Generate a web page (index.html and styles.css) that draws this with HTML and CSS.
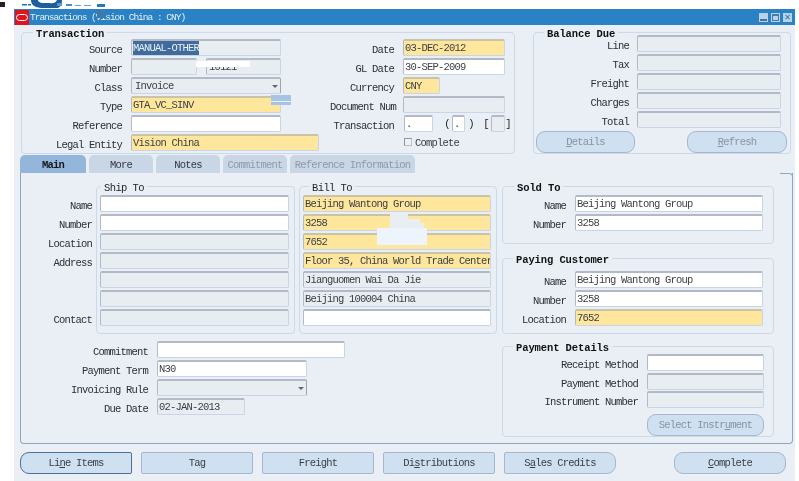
FILE: index.html
```html
<!DOCTYPE html>
<html lang="en">
<head>
<meta charset="utf-8">
<title>Transactions</title>
<link rel="stylesheet" href="styles.css">
</head>
<body>
<div class="page">
  <svg class="scrap" width="110" height="21" viewBox="0 0 110 21" aria-hidden="true">
    <rect x="0" y="2" width="5" height="5" fill="#222"/>
    <rect x="22" y="4" width="5" height="1.5" fill="#2a6fb0"/>
    <rect x="28" y="4" width="3" height="1.5" fill="#2a6fb0"/>
    <path d="M31 0 Q31 8 44 8 L58 8 Q62 6 62 0 L57 0 Q55 4 50 3 L42 3 Q38 2 38 0Z" fill="#1d5e9e"/>
    <rect x="57" y="3" width="5" height="3" fill="#5d95c8"/>
    <rect x="66" y="4" width="6" height="2" fill="#4d8cc4"/>
    <rect x="75" y="5" width="6" height="1" fill="#6a9fce"/>
    <rect x="84" y="5" width="7" height="1" fill="#6a9fce"/>
    <rect x="97" y="4" width="8" height="3" fill="#2a78bb"/>
    <rect x="97" y="10" width="8" height="8" fill="#3f78ad"/>
  </svg>
  <div class="window">
    <div class="titlebar">
      <span class="oracle"><span class="pill"></span></span>
      <span class="title">Transactions (Vision China : CNY)</span>
      <span class="winbtns">
        <span class="wb"><span class="wb-min"></span></span>
        <span class="wb"><span class="wb-max"></span></span>
        <span class="wb wb-x">✕</span>
      </span>
    </div>
    <div class="content">
      <div class="top">
        <section class="group g-trans">
          <div class="legend b lg-trans">Transaction</div>
          <div class="trans-cols">
            <div class="form fa">
              <div class="l">Source</div><div class="f"><span class="sel">MANUAL-OTHER</span></div>
              <div class="l">Number</div><div class="pair"><div class="f w66"></div><div class="f w75 pl">10121</div></div>
              <div class="l">Class</div><div class="f dd">Invoice<i class="arrow"></i></div>
              <div class="l">Type</div><div class="f y">GTA_VC_SINV</div>
              <div class="l">Reference</div><div class="f w"></div>
              <div class="l">Legal Entity</div><div class="f y w188">Vision China</div>
            </div>
            <div class="form fb">
              <div class="l">Date</div><div class="f y w102">03-DEC-2012</div>
              <div class="l">GL Date</div><div class="f w w102">30-SEP-2009</div>
              <div class="l">Currency</div><div class="f y w37">CNY</div>
              <div class="l">Document Num</div><div class="f w102"></div>
              <div class="l">Transaction</div>
              <div class="tx">
                <div class="f w w29">.</div><span class="sym s-open">(</span>
                <div class="f w w13">.</div><span class="sym">)</span><span class="sym s-br">[</span>
                <div class="f w14"></div><span class="sym s-end">]</span>
              </div>
              <div></div><div class="chk"><i class="box"></i>Complete</div>
            </div>
          </div>
        </section>
        <section class="group g-bal">
          <div class="legend b lg-bal">Balance Due</div>
          <div class="form fc">
            <div class="l">Line</div><div class="f"></div>
            <div class="l">Tax</div><div class="f"></div>
            <div class="l">Freight</div><div class="f"></div>
            <div class="l">Charges</div><div class="f"></div>
            <div class="l">Total</div><div class="f"></div>
          </div>
          <div class="bal-btns">
            <div class="btn dis rnd w99"><u>D</u>etails</div>
            <div class="btn dis rnd w100"><u>R</u>efresh</div>
          </div>
        </section>
      </div>

      <nav class="tabs">
        <div class="tab on w66">Main</div>
        <div class="tab w64">More</div>
        <div class="tab w64">Notes</div>
        <div class="tab off w64">Commitment</div>
        <div class="tab off w125">Reference Information</div>
      </nav>

      <div class="panel">
        <i class="corner"></i>
        <div class="upper">
          <div class="side-labels">
            <div class="l">Name</div><div class="l">Number</div><div class="l">Location</div><div class="l">Address</div><div class="l"></div><div class="l"></div><div class="l">Contact</div>
          </div>
          <section class="group g-ship">
            <div class="legend lg-ship">Ship To</div>
            <div class="stack">
              <div class="f w"></div><div class="f w"></div><div class="f"></div><div class="f"></div><div class="f"></div><div class="f"></div><div class="f"></div>
            </div>
          </section>
          <section class="group g-bill">
            <div class="legend lg-bill">Bill To</div>
            <div class="stack">
              <div class="f y">Beijing Wantong Group</div>
              <div class="f y">3258</div>
              <div class="f y">7652</div>
              <div class="f y">Floor 35, China World Trade Center</div>
              <div class="f">Jianguomen Wai Da Jie</div>
              <div class="f">Beijing 100004 China</div>
              <div class="f w"></div>
            </div>
          </section>
          <div class="right-col">
            <section class="group g-sold">
              <div class="legend b lg-sold">Sold To</div>
              <div class="form fd">
                <div class="l">Name</div><div class="f w">Beijing Wantong Group</div>
                <div class="l">Number</div><div class="f w">3258</div>
              </div>
            </section>
            <section class="group g-pay">
              <div class="legend b lg-r">Paying Customer</div>
              <div class="form fe">
                <div class="l">Name</div><div class="f w">Beijing Wantong Group</div>
                <div class="l">Number</div><div class="f w">3258</div>
                <div class="l">Location</div><div class="f y">7652</div>
              </div>
            </section>
          </div>
        </div>
        <div class="lower">
          <div class="form ff">
            <div class="l">Commitment</div><div class="f w w188"></div>
            <div class="l">Payment Term</div><div class="f w w150">N30</div>
            <div class="l">Invoicing Rule</div><div class="f dd w150"><i class="arrow"></i></div>
            <div class="l">Due Date</div><div class="f w88">02-JAN-2013</div>
          </div>
          <section class="group g-det">
            <div class="legend b lg-r">Payment Details</div>
            <div class="form fg">
              <div class="l">Receipt Method</div><div class="f w"></div>
              <div class="l">Payment Method</div><div class="f"></div>
              <div class="l up">Instrument Number</div><div class="f up"></div>
            </div>
            <div class="btn dis rnd sel-btn">Select Instr<u>u</u>ment</div>
          </section>
        </div>
      </div>

      <div class="actions">
        <div class="btn lrnd focus">Li<u>n</u>e Items</div>
        <div class="btn">Ta<u>g</u></div>
        <div class="btn">Frei<u>g</u>ht</div>
        <div class="btn">Di<u>s</u>tributions</div>
        <div class="btn rrnd">S<u>a</u>les Credits</div>
        <div class="btn rnd complete"><u>C</u>omplete</div>
      </div>
    </div>
  </div>
  <i class="patch p1"></i>
  <i class="patch p2"></i>
  <i class="patch p3"></i>
  <i class="patch p4"></i>
  <i class="patch p5"></i>
  <i class="patch p6"></i>
</div>
</body>
</html>
```
FILE: styles.css
```css
* { box-sizing: border-box; }
html, body { margin: 0; padding: 0; background: #fff; }
body {
  width: 799px;
  height: 481px;
  overflow: hidden;
  font-family: "Liberation Mono", "DejaVu Sans Mono", monospace;
  font-size: 10.5px;
  letter-spacing: -0.8px;
  color: #2b2f36;
}
.page { position: relative; width: 799px; height: 481px; overflow: hidden; }
.scrap { position: absolute; left: 0; top: 0; z-index: 3; }

.window {
  margin: 9px 4px 0 14px;
  height: 472px;
  background: #e9eff5;
  filter: blur(0.4px);
}
.titlebar {
  display: flex;
  align-items: center;
  height: 16px;
  background: #2a82c4;
  color: #e4eff8;
}
.oracle {
  display: flex;
  align-items: center;
  justify-content: center;
  width: 14px;
  height: 15px;
  margin-left: 1px;
  background: #e0141c;
}
.pill { width: 12px; height: 7px; border: 1.5px solid #fff; border-radius: 4px; }
.title { margin-left: 1px; font-size: 9.5px; letter-spacing: -1px; }
.winbtns { display: flex; gap: 3px; margin-left: auto; margin-right: 3px; }
.wb {
  display: flex;
  align-items: center;
  justify-content: center;
  width: 9px;
  height: 9px;
  background: #b5d3ea;
  position: relative;
}
.wb-min { width: 7px; height: 2px; background: #4b6f95; margin-top: 5px; }
.wb-max { width: 7px; height: 7px; border: 1px solid #4b7aa8; border-top-width: 2px; }
.wb-x { font-size: 8px; letter-spacing: 0; color: #3e6a97; font-family: "DejaVu Sans", sans-serif; font-weight: 700; line-height: 9px; }

.content { padding: 7px 0 0 6px; }
.top { display: flex; margin-left: 1px; }

.group {
  border: 1px solid #ccd9e9;
  border-radius: 4px;
}
.legend {
  width: fit-content;
  height: 12px;
  margin-top: -6px;
  padding: 0 3px;
  line-height: 14px;
  background: #e9eff5;
  color: #1d2026;
}
.b { font-weight: 700; letter-spacing: -0.1px; color: #111; }
.lg-trans { margin-left: 11px; }
.lg-bal { margin-left: 8px; }
.lg-ship { margin-left: 1px; letter-spacing: -0.6px; }
.lg-bill { margin-left: 6px; letter-spacing: -0.6px; }
.lg-r { margin-left: 10px; }
.lg-sold { margin-left: 11px; }

.g-trans { width: 494px; height: 122px; }
.g-bal { width: 258px; height: 122px; margin-left: 18px; padding: 0 3px 0 2px; }

.trans-cols { display: flex; }
.form {
  display: grid;
  grid-auto-rows: 17px;
  row-gap: 2px;
  column-gap: 9px;
}
.fa { grid-template-columns: 100px 150px; margin-right: 6px; }
.fb { grid-template-columns: 64px 108px; margin-left: 43px; }
.fc { grid-template-columns: 93px 144px; column-gap: 8px; margin-top: -4px; }
.fd { grid-template-columns: 63px 188px; margin: 2px 0 0 0; }
.fe { grid-template-columns: 63px 188px; margin: 6px 0 0 0; }
.ff { grid-template-columns: 127px 188px; margin-top: -5px; }
.fg { grid-template-columns: 135px 117px; margin-top: 1px; }

.l {
  text-align: right;
  line-height: 22px;
  white-space: nowrap;
}
.f {
  position: relative;
  height: 17px;
  padding: 0 0 0 1px;
  line-height: 14px;
  white-space: nowrap;
  overflow: hidden;
  background: #e8edf2;
  border: 1px solid;
  border-top-width: 2px;
  border-color: #b3bac5 #c7d5e8 #c7d5e8 #b3bac5;
  border-radius: 2px;
  color: #3a3e45;
}
.f.y { background: #ffe69d; border-top-color: #c9c3a8; }
.f.w { background: #fff; }
.dd { background: #e8edf2; border-color: #b3bac5 #9ea5ae #c7d5e8 #b3bac5; padding-left: 3px; }
.arrow {
  position: absolute;
  right: 2px;
  top: 6px;
  border-style: solid;
  border-width: 3px 3px 0;
  border-color: #5f6776 transparent transparent;
}
.sel { background: #3f6c9c; color: #e9eef4; display: inline-block; height: 15px; }
.w13 { width: 13px; } .w14 { width: 14px; } .w29 { width: 29px; } .w37 { width: 37px; }
.w66 { width: 66px; } .w75 { width: 75px; } .w88 { width: 88px; } .w102 { width: 102px; }
.w150 { width: 150px; } .w188 { width: 188px; min-width: 188px; }
.pair { display: flex; gap: 9px; }
.pl { padding-left: 2px; }
.tx { display: flex; align-items: flex-start; margin-left: 1px; }
.tx .f { flex: none; }
.sym { flex: none; width: 6px; line-height: 18px; color: #222; text-align: center; }
.s-open { margin-left: 11px; margin-right: 2px; }
.tx .sym:nth-of-type(2) { margin-left: 3px; }
.s-br { margin-left: 9px; margin-right: 2px; }
.chk { display: flex; align-items: center; gap: 3px; margin-left: 1px; color: #3a3e45; }
.box { width: 8px; height: 8px; margin-top: -1px; border: 1px solid #b9c0c9; border-top-color: #8f959d; border-left-color: #8f959d; background: #eef2f6; }

.bal-btns { display: flex; justify-content: space-between; margin-top: 3px; }
.btn {
  display: flex;
  align-items: center;
  justify-content: center;
  width: 112px;
  height: 22px;
  padding-bottom: 1px;
  background: #cfe0f1;
  border: 1px solid #a4b7ce;
  border-radius: 2px;
  color: #3a3e45;
  white-space: pre;
}
.btn u { text-underline-offset: 1px; }
.rnd { border-radius: 9px; }
.lrnd { border-radius: 9px 2px 2px 9px; }
.rrnd { border-radius: 2px 9px 9px 2px; }
.dis { color: #8894a1; }
.w99 { width: 99px; }
.w100 { width: 100px; }
.focus { border-color: #4e6f96; }

.tabs { display: flex; gap: 3px; margin-top: 1px; height: 18px; }
.tab {
  display: flex;
  align-items: center;
  justify-content: center;
  height: 18px;
  padding-top: 2px;
  background: #c9d6e6;
  border-radius: 5px 5px 0 0;
  color: #363a41;
}
.tab.on { background: #94b6da; color: #14181e; font-weight: 700; }
.tab.off { color: #8f9aa6; }
.w64 { width: 64px; }
.w125 { width: 125px; }

.panel {
  position: relative;
  width: 773px;
  height: 271px;
  padding: 13px 18px 0 0;
  border: 1px solid #8ea6c4;
  border-top: 0;
  border-radius: 0 0 4px 4px;
}
.corner {
  position: absolute;
  right: -1px;
  top: 0;
  width: 13px;
  height: 6px;
  border-top: 1px solid #8ea6c4;
  border-right: 1px solid #8ea6c4;
  border-top-right-radius: 4px;
}
.upper { display: flex; }
.side-labels { width: 71px; display: grid; grid-auto-rows: 17px; row-gap: 2px; padding-top: 9px; align-content: start; }
.g-ship { width: 199px; height: 148px; margin-left: 4px; padding-left: 3px; }
.g-bill { width: 198px; height: 148px; margin-left: 4px; padding-left: 3px; }
.stack { display: grid; grid-auto-rows: 17px; row-gap: 2px; margin-top: 2px; }
.g-ship .stack { width: 189px; }
.g-bill .stack { width: 188px; }
.right-col { width: 272px; margin-left: 5px; }
.g-sold { height: 58px; }
.g-pay { height: 76px; margin-top: 14px; }

.lower { display: flex; justify-content: space-between; margin-top: 12px; }
.g-det { width: 272px; height: 91px; }
.up { margin-top: -1px; }
.sel-btn { width: 117px; margin: 5px 0 0 144px; }

.actions { display: flex; gap: 9px; margin-top: 8px; }
.complete { margin-left: 49px; }

.patch { position: absolute; display: block; }
.p1 { left: 196px; top: 61px; width: 54px; height: 6px; background: #fff; }
.p2 { left: 271px; top: 95px; width: 20px; height: 10px; background: linear-gradient(#a8c4e4 60%, #e9eff5 60%, #e9eff5 75%, #a8c4e4 75%); }
.p3 { left: 390px; top: 214px; width: 18px; height: 14px; background: #e9eef3; }
.p4 { left: 408px; top: 219px; width: 12px; height: 9px; background: #e9eef3; }
.p5 { left: 420px; top: 223px; width: 4px; height: 5px; background: #e9eef3; }
.p6 { left: 377px; top: 228px; width: 50px; height: 17px; background: #edf4fc; }
```
